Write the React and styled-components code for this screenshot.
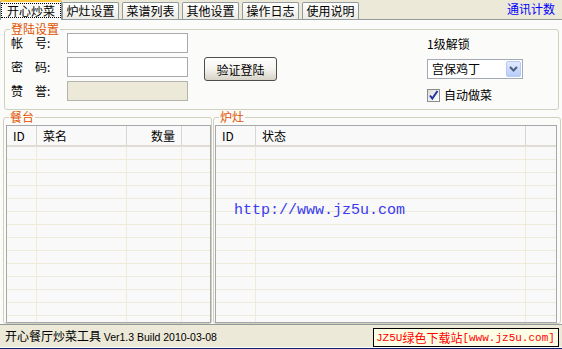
import React from 'react';
import styled, { createGlobalStyle } from 'styled-components';

const GlobalStyle = createGlobalStyle`
  html, body {
    margin: 0;
    padding: 0;
    background: #ECE9D8;
  }
  body {
    font-family: "Noto Sans CJK SC", "Liberation Sans", sans-serif;
    font-size: 12px;
  }
`;

const tabs = ['开心炒菜', '炉灶设置', '菜谱列表', '其他设置', '操作日志', '使用说明'];

const tableCols = [
  { label: 'ID', width: 30 },
  { label: '菜名', width: 90 },
  { label: '数量', width: 55, right: true },
  { label: '' },
];

const stoveCols = [
  { label: 'ID', width: 40 },
  { label: '状态', width: 270 },
  { label: '' },
];

const rows = Array.from({ length: 14 }, (_, i) => i);

export default function App() {
  return (
    <Window>
      <GlobalStyle />
      <TabBar>
        {tabs.map((t, i) => (
          <Tab key={t} $active={i === 0}>
            {i === 0 ? <Focus>{t}</Focus> : t}
          </Tab>
        ))}
        <CountLink>通讯计数</CountLink>
      </TabBar>

      <TabPage>
        <LoginBox>
          <Title>登陆设置</Title>
          <Form>
            <Label>帐　号:</Label>
            <TextBox readOnly />
            <span />
            <Label>密　码:</Label>
            <TextBox readOnly />
            <LoginButton>验证登陆</LoginButton>
            <Label>赞　誉:</Label>
            <TextBox disabled />
          </Form>
          <Unlock>
            <UnlockLabel>1级解锁</UnlockLabel>
            <Combo>
              <ComboText>宫保鸡丁</ComboText>
              <ComboButton>
                <svg width="9" height="6" viewBox="0 0 9 6">
                  <path d="M1 1 L4.5 4.5 L8 1" fill="none" stroke="#4D6185" strokeWidth="2" />
                </svg>
              </ComboButton>
            </Combo>
            <CheckRow>
              <CheckBox>
                <svg width="11" height="11" viewBox="0 0 11 11">
                  <path d="M2 5.5 L4.3 8.5 L9.5 1" fill="none" stroke="#22339C" strokeWidth="2" />
                </svg>
              </CheckBox>
              自动做菜
            </CheckRow>
          </Unlock>
        </LoginBox>

        <BottomRow>
          <Panel $w={209} $pad="7px 0 0 2px">
            <Title>餐台</Title>
            <ListView cols={tableCols} />
          </Panel>
          <Panel $pad="7px 3px 0 1px">
            <Title>炉灶</Title>
            <ListView cols={stoveCols}>
              <Watermark>http://www.jz5u.com</Watermark>
            </ListView>
          </Panel>
        </BottomRow>
      </TabPage>

      <StatusBar>
        <StatusText>
          开心餐厅炒菜工具 <Version>Ver1.3 Build 2010-03-08</Version>
        </StatusText>
        <SiteBox>
          JZ5U<Cjk>绿色下载站</Cjk>[www.jz5u.com]
        </SiteBox>
      </StatusBar>
      <BottomEdge />
    </Window>
  );
}

function ListView({ cols, children }) {
  return (
    <List>
      <Header>
        {cols.map((c, i) => (
          <HeadCell key={i} $w={c.width} $right={c.right}>{c.label}</HeadCell>
        ))}
      </Header>
      <Body>
        {rows.map(r => (
          <Row key={r}>
            {cols.map((c, i) => (
              <Cell key={i} $w={c.width} />
            ))}
          </Row>
        ))}
      </Body>
      {children}
    </List>
  );
}

const Window = styled.div`
  width: 562px;
  height: 349px;
  overflow: hidden;
  display: flex;
  flex-direction: column;
  background: #ECE9D8;
  color: #000;
  font-family: "Noto Sans CJK SC", "Liberation Sans", sans-serif;
  font-size: 12px;
  line-height: 14px;
`;

const TabBar = styled.div`
  height: 19px;
  flex: none;
  display: flex;
  align-items: flex-end;
  position: relative;
  z-index: 1;
`;

const Tab = styled.div`
  box-sizing: border-box;
  display: flex;
  align-items: center;
  justify-content: center;
  border: 1px solid #919B9C;
  border-bottom: none;
  border-radius: 2px 2px 0 0;
  white-space: nowrap;
  width: ${p => (p.$active ? 62 : 57)}px;
  height: ${p => (p.$active ? 20 : 17)}px;
  margin-bottom: ${p => (p.$active ? -1 : 0)}px;
  margin-right: 3px;
  background: ${p => (p.$active ? '#FBFBF9' : 'linear-gradient(#FFFFFF, #ECEBE6)')};
  border-top: ${p => (p.$active ? '2px solid #FFC83C' : '1px solid #919B9C')};
  padding-bottom: ${p => (p.$active ? 1 : 0)}px;

  &:first-child {
    margin-right: 0;
  }
`;

const Focus = styled.span`
  border: 1px dotted #000;
  padding: 0 5px;
  line-height: 13px;
`;

const CountLink = styled.span`
  align-self: flex-start;
  margin: 2px 7px 0 auto;
  color: #0000FF;
`;

const TabPage = styled.div`
  height: 306px;
  flex: none;
  box-sizing: border-box;
  border-top: 1px solid #919B9C;
  border-bottom: 1px solid #919B9C;
  background: #FBFBF9;
  padding-top: 9px;
  display: flex;
  flex-direction: column;
`;

const Group = styled.div`
  position: relative;
  box-sizing: border-box;
  border: 1px solid #D0D0BF;
  border-radius: 3px;
`;

const Title = styled.span`
  position: absolute;
  top: -7px;
  left: 5px;
  padding: 0 1px;
  background: #FBFBF9;
  color: #E05200;
  line-height: 12px;
`;

const LoginBox = styled(Group)`
  height: 81px;
  margin: 0 3px 0 4px;
  padding: 3px 0 0 6px;
  display: flex;
`;

const Form = styled.div`
  display: grid;
  grid-template-columns: 56px 121px auto;
  grid-auto-rows: 20px;
  row-gap: 4px;
  align-items: center;
  align-content: start;
`;

const Label = styled.span`
  white-space: nowrap;
`;

const TextBox = styled.input`
  box-sizing: border-box;
  width: 121px;
  height: 20px;
  margin: 0;
  padding: 0 3px;
  border: 1px solid #A9AAAD;
  background: #FFFFFF;
  outline: none;

  &:disabled {
    background: #ECE9D8;
    border-color: #B4B3AE;
  }
`;

const LoginButton = styled.button`
  align-self: start;
  box-sizing: border-box;
  width: 73px;
  height: 24px;
  margin: 0 0 0 16px;
  padding: 0;
  border: 1px solid #4E4E4E;
  border-radius: 3px;
  background: linear-gradient(#FFFFFF 0%, #F4F3EE 50%, #D6D2C6 100%);
  font-family: inherit;
  font-size: 12px;
  color: #000;
`;

const Unlock = styled.div`
  margin: 0 35px 0 auto;
  width: 96px;
  padding-top: 4px;
  display: flex;
  flex-direction: column;
`;

const UnlockLabel = styled.span`
  line-height: 14px;
`;

const Combo = styled.div`
  box-sizing: border-box;
  margin-top: 8px;
  height: 20px;
  display: flex;
  align-items: center;
  border: 1px solid #A3A9B6;
  background: #FFFFFF;
  padding: 0 1px 0 4px;
`;

const ComboText = styled.span`
  flex: 1;
`;

const ComboButton = styled.span`
  box-sizing: border-box;
  width: 15px;
  height: 16px;
  display: flex;
  align-items: center;
  justify-content: center;
  border: 1px solid #B7CAF5;
  border-radius: 2px;
  background: linear-gradient(#E2EAFE, #B8CCF8);
`;

const CheckRow = styled.div`
  margin-top: 9px;
  display: flex;
  align-items: center;
  gap: 4px;
`;

const CheckBox = styled.span`
  box-sizing: border-box;
  width: 13px;
  height: 13px;
  display: flex;
  align-items: center;
  justify-content: center;
  border: 1px solid #8A8C8E;
  background: linear-gradient(135deg, #DCDCD7, #FFFFFF);
`;

const BottomRow = styled.div`
  height: 207px;
  margin: 7px 1px 0 3px;
  display: flex;
  gap: 1px;
`;

const Panel = styled(Group)`
  display: flex;
  padding: ${p => p.$pad};
  ${p => (p.$w ? `width: ${p.$w}px; flex: none;` : 'flex: 1;')}
`;

const List = styled.div`
  position: relative;
  flex: 1;
  box-sizing: border-box;
  height: 198px;
  display: flex;
  flex-direction: column;
  border: 1px solid #A7A6AA;
  background: #F9F9F9;
  overflow: hidden;
`;

const Header = styled.div`
  flex: none;
  height: 19px;
  display: flex;
  border-bottom: 2px solid #DEDCD4;
`;

const HeadCell = styled.div`
  box-sizing: border-box;
  ${p => (p.$w ? `width: ${p.$w}px; flex: none; border-right: 1px solid #D8D6CF;` : 'flex: 1;')}
  padding: 0 6px;
  line-height: 19px;
  text-align: ${p => (p.$right ? 'right' : 'left')};
  white-space: nowrap;
`;

const Body = styled.div`
  flex: 1;
  overflow: hidden;
`;

const Row = styled.div`
  box-sizing: border-box;
  height: 13px;
  display: flex;
  border-bottom: 1px solid #EEEBDA;
`;

const Cell = styled.div`
  box-sizing: border-box;
  ${p => (p.$w ? `width: ${p.$w}px; flex: none; border-right: 1px solid #EEEBDA;` : 'flex: 1;')}
`;

const Watermark = styled.span`
  position: absolute;
  left: 18px;
  top: 77px;
  font-family: "Liberation Mono", monospace;
  font-size: 15px;
  line-height: 15px;
  color: #3A3AF2;
  white-space: nowrap;
`;

const StatusBar = styled.div`
  height: 22px;
  flex: none;
  display: flex;
  align-items: center;
  padding-left: 5px;
`;

const StatusText = styled.span`
  white-space: nowrap;
  margin-top: 1px;
`;

const Version = styled.span`
  font-family: "Liberation Sans", sans-serif;
  font-size: 10.5px;
`;

const SiteBox = styled.div`
  align-self: flex-end;
  margin: 0 3px 0 auto;
  box-sizing: border-box;
  width: 186px;
  height: 19px;
  padding-left: 2px;
  display: flex;
  align-items: center;
  border: 1px solid #000;
  background: #FFFFE6;
  color: #FF0000;
  font-family: "Liberation Mono", "Noto Sans CJK SC", monospace;
  font-size: 11px;
  white-space: nowrap;
`;

const Cjk = styled.span`
  font-family: "Noto Sans CJK SC", sans-serif;
  font-size: 12px;
`;

const BottomEdge = styled.div`
  height: 2px;
  flex: none;
  box-sizing: border-box;
  border-top: 1px solid #FFFFFF;
  background: #0A246A;
`;
